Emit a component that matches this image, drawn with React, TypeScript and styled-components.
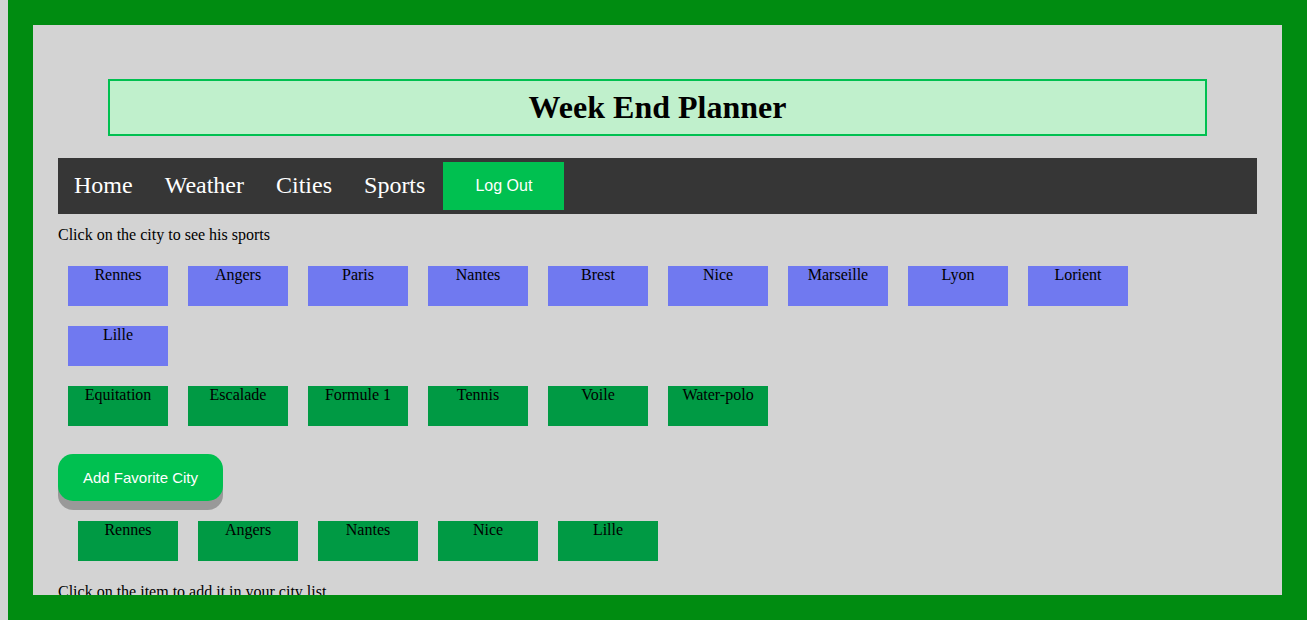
import React from "react";
import styled, { createGlobalStyle } from "styled-components";

const GlobalStyle = createGlobalStyle`
  html, body {
    margin: 0;
    padding: 0;
    background: #d3d3d3;
  }
  body {
    padding-left: 8px;
    font-family: "Liberation Serif", "Times New Roman", serif;
    font-size: 16px;
    color: #000;
  }
`;

const Frame = styled.div`
  box-sizing: border-box;
  height: 620px;
  border: 25px solid #008c11;
  background: #d3d3d3;
  padding: 0 25px;
  overflow: hidden;
`;

const TitleBox = styled.header`
  margin: 54px 50px 22px;
  border: 2px solid #00c050;
  background: #c0f0cc;
  padding: 8px 0;
  text-align: center;
`;

const Title = styled.h1`
  margin: 0;
  font-size: 32px;
  font-weight: bold;
  line-height: 37px;
`;

const Nav = styled.nav`
  display: flex;
  align-items: center;
  height: 56px;
  background: #363636;
`;

const NavLink = styled.a`
  padding: 0 16px 2px;
  color: #fff;
  font-size: 24px;
  text-decoration: none;
  cursor: pointer;
`;

const LogOut = styled.button`
  margin-left: 2px;
  border: none;
  background: #00c050;
  color: #fff;
  font-family: "Liberation Sans", Arial, sans-serif;
  font-size: 16px;
  line-height: 18px;
  padding: 15px 32px;
  cursor: pointer;
`;

const Hint = styled.p`
  margin: 12px 0;
  line-height: 18px;
`;

const Tiles = styled.div<{ $inset?: boolean }>`
  display: flex;
  flex-wrap: wrap;
  padding-left: ${(p) => (p.$inset ? "10px" : "0")};
`;

const Tile = styled.div<{ $kind: "city" | "sport" }>`
  width: 100px;
  height: 40px;
  margin: 10px;
  background: ${(p) => (p.$kind === "city" ? "#7079f0" : "#009a44")};
  text-align: center;
  line-height: 18px;
  cursor: pointer;
`;

const AddButton = styled.button`
  margin: 18px 0 10px;
  border: none;
  border-radius: 15px;
  background: #00c050;
  box-shadow: 0 9px 0 #999;
  color: #fff;
  font-family: "Liberation Sans", Arial, sans-serif;
  font-size: 15px;
  line-height: 17px;
  padding: 15px 25px;
  cursor: pointer;
`;

const cities = ["Rennes", "Angers", "Paris", "Nantes", "Brest", "Nice", "Marseille", "Lyon", "Lorient", "Lille"];
const sports = ["Equitation", "Escalade", "Formule 1", "Tennis", "Voile", "Water-polo"];
const favorites = ["Rennes", "Angers", "Nantes", "Nice", "Lille"];

export default function App() {
  return (
    <>
      <GlobalStyle />
      <Frame>
        <TitleBox>
          <Title>Week End Planner</Title>
        </TitleBox>
        <Nav>
          <NavLink>Home</NavLink>
          <NavLink>Weather</NavLink>
          <NavLink>Cities</NavLink>
          <NavLink>Sports</NavLink>
          <LogOut>Log Out</LogOut>
        </Nav>
        <Hint>Click on the city to see his sports</Hint>
        <Tiles>
          {cities.map((c) => (
            <Tile key={c} $kind="city">{c}</Tile>
          ))}
        </Tiles>
        <Tiles>
          {sports.map((s) => (
            <Tile key={s} $kind="sport">{s}</Tile>
          ))}
        </Tiles>
        <AddButton>Add Favorite City</AddButton>
        <Tiles $inset>
          {favorites.map((f) => (
            <Tile key={f} $kind="sport">{f}</Tile>
          ))}
        </Tiles>
        <Hint>Click on the item to add it in your city list</Hint>
      </Frame>
    </>
  );
}
